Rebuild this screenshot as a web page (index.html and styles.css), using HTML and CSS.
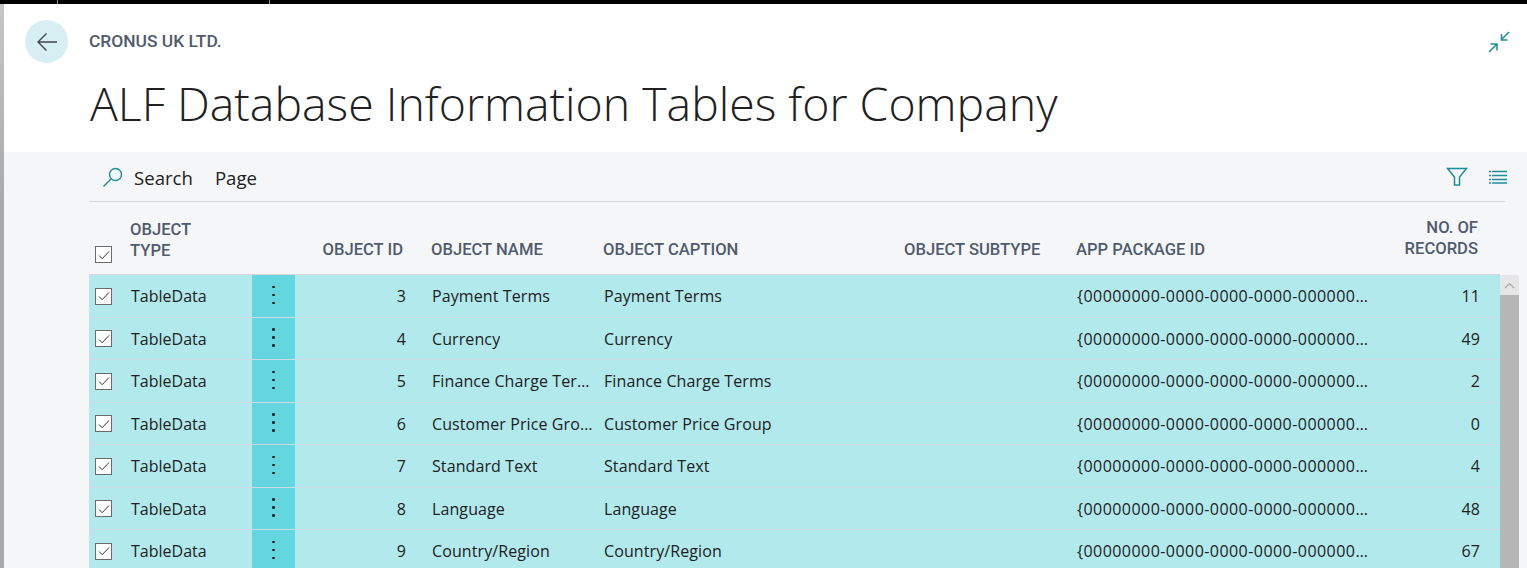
FILE: index.html
```html
<!DOCTYPE html>
<html>
<head>
    <meta charset="UTF-8">
    <title>ALF Database Information Tables for Company</title>
    <link rel="stylesheet" href="styles.css">
</head>
<body>
    <div class="topbar">
        <span class="tick tick-a"></span>
        <span class="tick tick-b"></span>
    </div>
    <div class="page">
        <header class="page-head">
            <div class="crumb-row">
                <button class="back-btn">
                    <svg width="24" height="24" viewBox="0 0 24 24" fill="none" stroke="#3f474f" stroke-width="1.4"><path d="M22 12H3M11.5 3.5L3 12l8.5 8.5"/></svg>
                </button>
                <span class="company">CRONUS UK LTD.</span>
                <svg class="collapse-icon" width="22" height="22" viewBox="0 0 22 22" fill="none" stroke="#1f8f97" stroke-width="1.5"><path d="M21 1l-8 8M13.5 3v6h6M1 21l8-8M2.5 13H9v6.5"/></svg>
            </div>
            <h1>ALF Database Information Tables for Company</h1>
        </header>
        <main class="content">
            <div class="toolbar">
                <div class="toolbar-left">
                    <svg class="search-icon" width="22" height="22" viewBox="0 0 22 22" fill="none" stroke="#1f8f97" stroke-width="1.4"><circle cx="13.5" cy="8.5" r="6"/><path d="M9.2 12.8L1.5 20.5"/></svg>
                    <span class="tool-item">Search</span>
                    <span class="tool-item">Page</span>
                </div>
                <div class="toolbar-right">
                    <svg width="22" height="20" viewBox="0 0 22 20" fill="none" stroke="#1f8f97" stroke-width="1.5"><path d="M1.5 1.5h19L13.5 10v8h-5v-8z"/></svg>
                    <svg width="18" height="14" viewBox="0 0 18 14" fill="none" stroke="#1f8f97" stroke-width="1.3"><path d="M0 1.5h2M3 1.5h15M0 5.5h2M3 5.5h15M0 9.5h2M3 9.5h15M0 13h2M3 13h15"/></svg>
                </div>
            </div>
            <div class="grid-wrap">
                <div class="grid">
                    <div class="row head-row">
                        <div class="cell check-cell"><span class="check"><svg width="14" height="14" viewBox="0 0 14 14" fill="none" stroke="#333" stroke-width="1"><path d="M2 7.5l3.2 3.2L12 3.5"/></svg></span></div>
                        <div class="cell type-cell">OBJECT<br>TYPE</div>
                        <div class="cell dots-cell head-blank"></div>
                        <div class="cell id-cell">OBJECT ID</div>
                        <div class="cell name-cell">OBJECT NAME</div>
                        <div class="cell caption-cell">OBJECT CAPTION</div>
                        <div class="cell subtype-cell">OBJECT SUBTYPE</div>
                        <div class="cell package-cell">APP PACKAGE ID</div>
                        <div class="cell records-cell">NO. OF<br>RECORDS</div>
                    </div>
                    <div id="rows"></div>
                </div>
                <div class="scrollbar">
                    <div class="scroll-up">
                        <svg width="11" height="7" viewBox="0 0 11 7" fill="none" stroke="#a8a8a8" stroke-width="1.2"><path d="M1 6l4.5-4.5L10 6"/></svg>
                    </div>
                    <div class="scroll-thumb"></div>
                </div>
            </div>
        </main>
    </div>

    <script>
        const tables = [
            [3, 'Payment Terms', 'Payment Terms', 11],
            [4, 'Currency', 'Currency', 49],
            [5, 'Finance Charge Terms', 'Finance Charge Terms', 2],
            [6, 'Customer Price Group', 'Customer Price Group', 0],
            [7, 'Standard Text', 'Standard Text', 4],
            [8, 'Language', 'Language', 48],
            [9, 'Country/Region', 'Country/Region', 67]
        ];
        const checkIcon = '<svg width="14" height="14" viewBox="0 0 14 14" fill="none" stroke="#333" stroke-width="1"><path d="M2 7.5l3.2 3.2L12 3.5"/></svg>';

        document.getElementById('rows').innerHTML = tables.map(t => `
            <div class="row data-row">
                <div class="cell check-cell"><span class="check">${checkIcon}</span></div>
                <div class="cell type-cell">TableData</div>
                <div class="cell dots-cell"><span class="dots"><i></i><i></i><i></i></span></div>
                <div class="cell id-cell">${t[0]}</div>
                <div class="cell name-cell"><span class="clip">${t[1]}</span></div>
                <div class="cell caption-cell">${t[2]}</div>
                <div class="cell subtype-cell"></div>
                <div class="cell package-cell"><span class="clip">{00000000-0000-0000-0000-000000000000}</span></div>
                <div class="cell records-cell">${t[3]}</div>
            </div>`).join('');
    </script>
</body>
</html>
```

FILE: styles.css
```css
html, body {
    height: 100%;
}

body {
    margin: 0;
    overflow: hidden;
    background-color: #fff;
    font-family: "Open Sans", "Noto Sans", sans-serif;
    color: #212121;
}

.topbar {
    position: relative;
    height: 4px;
    background-color: #000;
}

.tick {
    position: absolute;
    top: 0;
    width: 1px;
    height: 4px;
    background-color: #8a8a8a;
}

.tick-a { left: 57px; }
.tick-b { left: 269px; }

.page {
    height: 564px;
    overflow: hidden;
    border-left: 4px solid #a9a9a9;
    border-image: linear-gradient(#c6c6c6, #a9a9a9 37%) 1;
    display: flex;
    flex-direction: column;
}

.page-head {
    flex: none;
    height: 148px;
    box-sizing: border-box;
    padding: 16px 0 0 21px;
}

.crumb-row {
    display: flex;
    align-items: center;
    height: 43px;
}

.back-btn {
    width: 43px;
    height: 43px;
    padding: 0;
    border: 0;
    border-radius: 50%;
    background-color: #d7eff2;
    display: flex;
    align-items: center;
    justify-content: center;
}

.company {
    margin-left: 21px;
    margin-top: -2px;
    font-family: "Roboto", sans-serif;
    font-size: 17.4px;
    font-weight: 500;
    color: #505c6d;
}

.collapse-icon {
    margin-left: auto;
    margin-right: 17px;
}

h1 {
    margin: 8px 0 0 65px;
    font-size: 46.4px;
    line-height: 64px;
    font-weight: 300;
    white-space: nowrap;
    color: #212121;
}

.content {
    flex: none;
    height: 416px;
    overflow: hidden;
    background-color: #f5f6f8;
    padding-left: 85px;
    padding-right: 8px;
}

.toolbar {
    height: 50px;
    box-sizing: border-box;
    margin-right: 14px;
    border-bottom: 1px solid #d5d6d8;
    display: flex;
    align-items: center;
    justify-content: space-between;
}

.toolbar-left {
    display: flex;
    align-items: center;
    padding-left: 13px;
}

.search-icon {
    margin-right: 10px;
}

.tool-item {
    font-size: 18.6px;
    margin-right: 22px;
    padding-top: 2px;
}

.toolbar-right {
    display: flex;
    align-items: center;
    gap: 21px;
    margin-right: -2px;
}

.grid-wrap {
    display: flex;
}

.grid {
    width: 1411px;
}

.row {
    display: grid;
    grid-template-columns: 41px 122px 43px 111px 190px 282px 173px 323px 126px;
}

.cell {
    display: flex;
    align-items: center;
    box-sizing: border-box;
    white-space: nowrap;
    min-width: 0;
}

.head-row {
    height: 73px;
    border-bottom: 1px solid #d5d6d8;
    box-sizing: border-box;
    font-family: "Roboto", sans-serif;
    font-size: 16.6px;
    line-height: 21px;
    font-weight: 500;
    color: #505c6d;
}

.head-row .cell {
    align-items: flex-end;
    padding-bottom: 14px;
}

.head-row .check-cell {
    padding-bottom: 11px;
}

.head-row .type-cell {
    padding-bottom: 13px;
}

.head-row .name-cell,
.head-row .caption-cell,
.head-row .package-cell {
    margin-left: -1px;
}

.head-row .id-cell {
    padding-right: 3px;
}

.head-row .records-cell {
    padding-right: 22px;
    padding-bottom: 15px;
}

.data-row {
    height: 42.5px;
    box-sizing: border-box;
    background-color: #b1e9ed;
    border-bottom: 1px solid #ccdbe1;
    font-size: 16px;
    letter-spacing: 0.1px;
}

.data-row .cell {
    padding-top: 0.5px;
}

.check-cell {
    padding-left: 6px;
}

.check {
    box-sizing: border-box;
    width: 17px;
    height: 17px;
    border: 1.5px solid #6b6b6b;
    background-color: #fff;
    display: flex;
    align-items: center;
    justify-content: center;
}

.data-row .type-cell {
    padding-left: 1px;
    letter-spacing: 0;
}

.data-row .dots-cell {
    background-color: #64d6df;
    justify-content: center;
}

.dots {
    display: flex;
    flex-direction: column;
    gap: 5.5px;
    margin-top: -2px;
}

.dots i {
    width: 2.5px;
    height: 2.5px;
    border-radius: 50%;
    background-color: #222;
}

.id-cell {
    justify-content: flex-end;
}

.name-cell {
    padding-left: 26px;
}

.caption-cell {
    padding-left: 8px;
}

.subtype-cell {
    padding-left: 26px;
}

.package-cell {
    padding-left: 26px;
}

.clip {
    display: block;
    overflow: hidden;
    text-overflow: ellipsis;
}

.data-row .package-cell .clip {
    letter-spacing: 0.45px;
    width: 293px;
}

.records-cell {
    justify-content: flex-end;
    text-align: right;
    padding-right: 20px;
}

.scrollbar {
    width: 19px;
    padding-top: 73px;
}

.scroll-up {
    height: 20px;
    background-color: #e6e6e6;
    display: flex;
    align-items: center;
    justify-content: center;
}

.scroll-thumb {
    height: 300px;
    background-color: #b6b6b6;
}
```
